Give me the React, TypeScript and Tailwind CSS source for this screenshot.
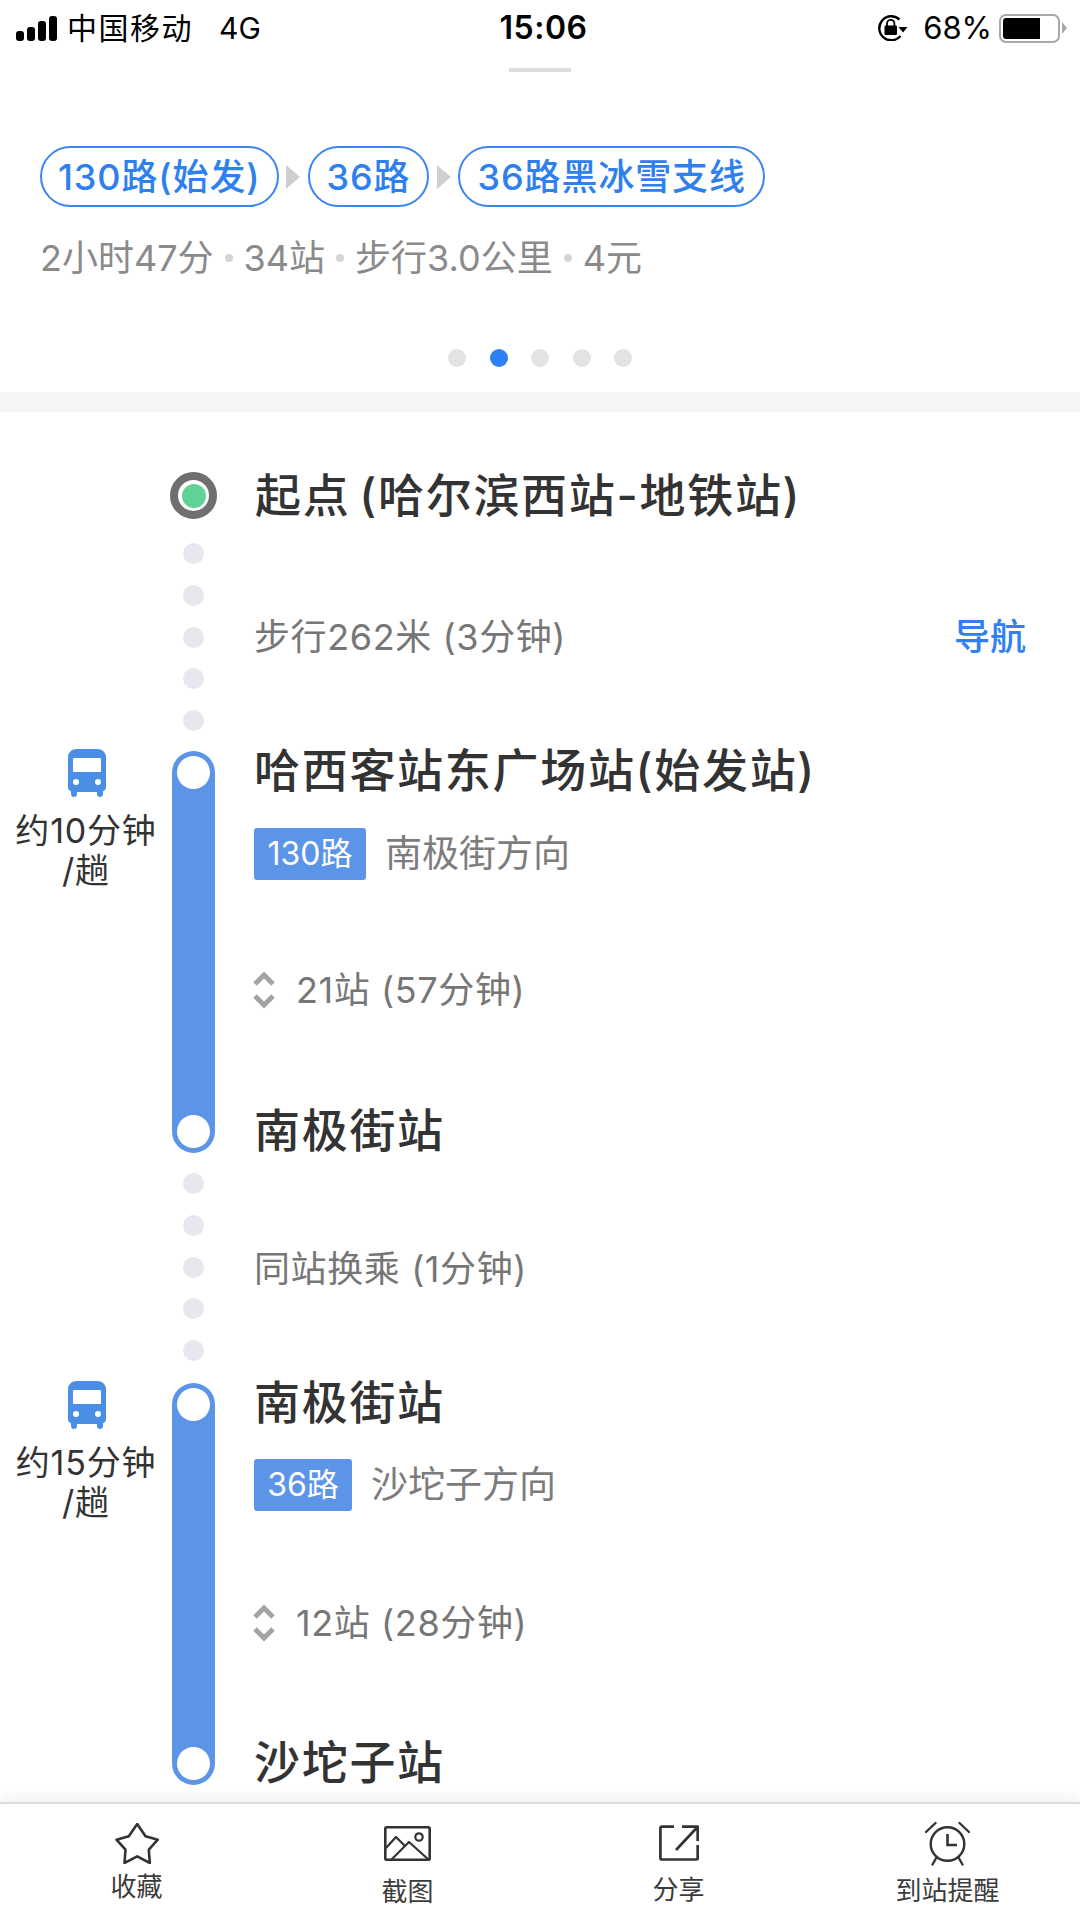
import React from "react";

const FONT = "font-['Inter','Noto_Sans_CJK_SC',sans-serif]";
const TITLE = "text-[46px] leading-[42px] font-medium text-[#333] tracking-[1.7px] whitespace-nowrap";
const NOTE = "text-[36px] text-[#767676] tracking-[0.6px] whitespace-nowrap";

function Signal() {
  return (
    <div className="flex items-end gap-[3px] h-[25px]">
      <div className="w-[8px] h-[10px] rounded-[3px] bg-black" />
      <div className="w-[8px] h-[14px] rounded-[3px] bg-black" />
      <div className="w-[8px] h-[20px] rounded-[3px] bg-black" />
      <div className="w-[8px] h-[25px] rounded-[3px] bg-black" />
    </div>
  );
}

function RotationLock() {
  return (
    <svg width="30" height="26" viewBox="0 0 30 26" fill="none">
      <path d="M21.500 4.500A12 12 0 1 0 22.500 21" stroke="#000" strokeWidth="2.400" />
      <path d="M20.500 12h9l-4.500 5.500z" fill="#000" />
      <rect x="6.500" y="10.500" width="12.500" height="9.500" rx="1.200" fill="#000" />
      <path d="M9 11V8.500a3.700 3.700 0 0 1 7.400 0V11" stroke="#000" strokeWidth="1.800" />
    </svg>
  );
}

function Battery() {
  return (
    <div className="flex items-center gap-[2px]">
      <div className="w-[61px] h-[29px] rounded-[7px] border-[2.5px] border-[#a8a8a8] p-[2px]">
        <div className="w-[37px] h-full rounded-l-[3px] bg-black" />
      </div>
      <svg width="5" height="12" viewBox="0 0 5 12">
        <path d="M0 0 L5 6 L0 12 Z" fill="#a8a8a8" />
      </svg>
    </div>
  );
}

function Pill({ text, px }: { text: string; px: string }) {
  return (
    <div className={`h-[61px] rounded-full border-2 border-[#3b86ee] ${px} flex items-center text-[36px] font-medium text-[#2f80ef] tracking-[0.9px] whitespace-nowrap`}>
      {text}
    </div>
  );
}

function Arrow() {
  return (
    <svg width="14" height="24" viewBox="0 0 14 24" className="mx-[7.500px] shrink-0">
      <path d="M0 0 L14 12 L0 24 Z" fill="#cfcfcf" />
    </svg>
  );
}

function Sep() {
  return <span className="mx-[11px] inline-block w-[8px] h-[8px] rounded-full bg-[#d4d4d4]" />;
}

function Dots({ pt }: { pt: string }) {
  return (
    <div className={`w-[43px] flex flex-col items-center gap-[20.75px] ${pt}`}>
      {[0, 1, 2, 3, 4].map((i) => (
        <div key={i} className="w-[21px] h-[21px] rounded-full bg-[#e6e8ee]" />
      ))}
    </div>
  );
}

function BusIcon() {
  return (
    <svg width="38" height="48" viewBox="0 0 38 48">
      <path
        fill="#4a8fe3"
        d="M9 0h20c5 0 9 3.500 9 8v30c0 2-1 3.500-3 4.200V45c0 1.700-1.300 3-3 3s-3-1.300-3-3v-2H9v2c0 1.700-1.300 3-3 3s-3-1.300-3-3v-2.800C1 41.500 0 40 0 38V8c0-4.500 4-8 9-8z"
      />
      <rect x="5" y="9" width="28" height="14" rx="1" fill="#fff" />
      <circle cx="8" cy="33" r="3" fill="#fff" />
      <circle cx="30" cy="33" r="3" fill="#fff" />
    </svg>
  );
}

function Updown() {
  return (
    <svg width="24" height="38" viewBox="0 0 24 38" fill="none" stroke="#a3a3a3" strokeWidth="5">
      <path d="M3 13 L12 4 L21 13" />
      <path d="M3 25 L12 34 L21 25" />
    </svg>
  );
}

function Segment({
  wait,
  first,
  tag,
  dir,
  stops,
  last,
  tagW,
  tagMt,
  stopsMt,
}: {
  wait: string;
  first: string;
  tag: string;
  dir: string;
  stops: string;
  last: string;
  tagW: string;
  tagMt: string;
  stopsMt: string;
}) {
  return (
    <div className="flex h-[402px]">
      <div className="w-[172px] flex flex-col items-center">
        <div className="-mt-[2px] ml-[1px]">
          <BusIcon />
        </div>
        <div className="mt-[14px] text-[34px] leading-[40px] text-[#333] text-center tracking-[0.8px] whitespace-nowrap">
          {wait}
          <br />
          /趟
        </div>
      </div>
      <div className="w-[43px] rounded-full bg-[#5c94e8] flex flex-col justify-between items-center py-[5px]">
        <div className="w-[33px] h-[33px] rounded-full bg-white" />
        <div className="w-[33px] h-[33px] rounded-full bg-white" />
      </div>
      <div className="pl-[39px] flex flex-col">
        <div className={`-mt-[2px] h-[42px] flex items-center ${TITLE}`}>{first}</div>
        <div className={`${tagMt} flex items-center`}>
          <div className={`${tagW} h-[52px] rounded-[3px] bg-[#5c94e8] flex items-center justify-center text-[32px] text-white`}>
            {tag}
          </div>
          <div className="ml-[19px] text-[37px] text-[#7c7c7c] whitespace-nowrap">{dir}</div>
        </div>
        <div className={`${stopsMt} flex items-center h-[50px] -ml-[2px]`}>
          <Updown />
          <div className={`ml-[20px] ${NOTE}`}>{stops}</div>
        </div>
        <div className={`mt-auto mb-[2px] h-[42px] flex items-center ${TITLE}`}>{last}</div>
      </div>
    </div>
  );
}

function ToolItem({ icon, label, lblMt, w }: { icon: React.ReactNode; label: string; lblMt: string; w: string }) {
  return (
    <div className={`${w} flex flex-col items-center`}>
      <div className="h-[50px] flex items-center justify-center">{icon}</div>
      <div className={`${lblMt} text-[26px] leading-[32px] text-[#3c3c3c] whitespace-nowrap`}>{label}</div>
    </div>
  );
}

export default function App() {
  return (
    <div className={`${FONT} w-[1080px] h-[1920px] bg-white flex flex-col overflow-hidden`}>
      {/* status bar */}
      <div className="h-[56px] flex items-center pl-[16px] pr-[13px] text-black">
        <div className="flex-1 flex items-center">
          <Signal />
          <span className="ml-[10px] text-[30px] tracking-[1.500px]">中国移动</span>
          <span className="ml-[26px] text-[30px]">4G</span>
        </div>
        <div className="text-[32px] font-semibold tracking-[0.5px] ml-[4px]">15:06</div>
        <div className="flex-1 flex items-center justify-end">
          <RotationLock />
          <span className="ml-[15px] text-[31px]">68%</span>
          <span className="ml-[7px]">
            <Battery />
          </span>
        </div>
      </div>

      {/* route summary */}
      <div className="h-[336px] flex flex-col">
        <div className="mt-[12px] mx-auto w-[62px] h-[4px] bg-[#dcdcdc]" />
        <div className="mt-[74px] pl-[40px] flex items-center">
          <Pill text="130路(始发)" px="px-[16px]" />
          <Arrow />
          <Pill text="36路" px="px-[17px]" />
          <Arrow />
          <Pill text="36路黑冰雪支线" px="px-[17px]" />
        </div>
        <div className="mt-[19px] pl-[40px] flex items-center text-[36px] leading-[64px] text-[#8a8a8a] whitespace-nowrap">
          <span>2小时47分</span>
          <Sep />
          <span>34站</span>
          <Sep />
          <span>步行3.0公里</span>
          <Sep />
          <span>4元</span>
        </div>
        <div className="mt-[59px] flex justify-center gap-[23.500px]">
          <div className="w-[18px] h-[18px] rounded-full bg-[#e3e3e3]" />
          <div className="w-[18px] h-[18px] rounded-full bg-[#2f80f5]" />
          <div className="w-[18px] h-[18px] rounded-full bg-[#e3e3e3]" />
          <div className="w-[18px] h-[18px] rounded-full bg-[#e3e3e3]" />
          <div className="w-[18px] h-[18px] rounded-full bg-[#e3e3e3]" />
        </div>
      </div>

      <div className="h-[20px] bg-[#f5f5f5]" />

      {/* timeline */}
      <div className="flex-1 min-h-0 overflow-hidden flex flex-col pt-[60px]">
        <div className="flex h-[47px]">
          <div className="w-[172px]" />
          <div className="w-[43px] flex justify-center">
            <div className="w-[47px] h-[47px] shrink-0 rounded-full border-[8px] border-[#6f6f6f] bg-white flex items-center justify-center">
              <div className="w-[24px] h-[24px] rounded-full bg-[#63d297]" />
            </div>
          </div>
          <div className={`pl-[40px] pb-[2px] flex items-center [word-spacing:-5px] ${TITLE}`}>起点 (哈尔滨西站-地铁站)</div>
        </div>

        <div className="flex h-[232px]">
          <div className="w-[172px]" />
          <Dots pt="pt-[24px]" />
          <div className="pl-[39px] pt-[4px] flex-1 pr-[54px] flex items-center justify-between">
            <span className={NOTE}>步行262米 (3分钟)</span>
            <span className="text-[36px] font-medium text-[#2f80f0]">导航</span>
          </div>
        </div>

        <Segment
          wait="约10分钟"
          first="哈西客站东广场站(始发站)"
          tag="130路"
          tagW="w-[112px]"
          tagMt="mt-[35px]"
          stopsMt="mt-[83px]"
          dir="南极街方向"
          stops="21站 (57分钟)"
          last="南极街站"
        />

        <div className="flex h-[230px]">
          <div className="w-[172px]" />
          <Dots pt="pt-[20px]" />
          <div className="pl-[39px] pt-[2px] flex-1 flex items-center">
            <span className={NOTE}>同站换乘 (1分钟)</span>
          </div>
        </div>

        <Segment
          wait="约15分钟"
          first="南极街站"
          tag="36路"
          tagW="w-[98px]"
          tagMt="mt-[34px]"
          stopsMt="mt-[85px]"
          dir="沙坨子方向"
          stops="12站 (28分钟)"
          last="沙坨子站"
        />
      </div>

      {/* toolbar */}
      <div className="h-[118px] shrink-0 border-t-2 border-[#dcdce0] shadow-[0_-6px_10px_rgba(0,0,0,0.05)] flex pt-[14px] bg-white relative">
        <ToolItem
          w="w-[273px]"
          lblMt="mt-[3px]"
          label="收藏"
          icon={
            <svg width="44" height="41" viewBox="-1.500 -1 44 41" fill="none" stroke="#333" strokeWidth="2.600" strokeLinejoin="round">
              <path d="M20.700 0 L29 12.300 L41.300 15.700 L32.300 25.700 L33.300 39 L20.700 32.300 L8 39 L9 25.700 L0 15.700 L12.300 12.300 Z" />
            </svg>
          }
        />
        <ToolItem
          w="w-[269px]"
          lblMt="mt-[8px]"
          label="截图"
          icon={
            <svg width="47" height="35" viewBox="0 0 47 35" fill="none" stroke="#333" strokeWidth="2.600" strokeLinejoin="round">
              <rect x="1.300" y="1.300" width="44.400" height="32.400" rx="1.500" />
              <path d="M2 22 L12 11 L21 20" strokeWidth="2.200" />
              <path d="M7 34 L25 16 L45 34" strokeWidth="2.200" />
              <circle cx="35" cy="11" r="3.700" strokeWidth="2.200" />
            </svg>
          }
        />
        <ToolItem
          w="w-[273px]"
          lblMt="mt-[6px]"
          label="分享"
          icon={
            <svg width="40" height="36" viewBox="0 0 40 36" fill="none" stroke="#333" strokeWidth="2.700" strokeLinejoin="round">
              <path d="M15 1.700 H3 Q1.400 1.700 1.400 3.300 V33 Q1.400 34.500 3 34.500 H37 Q38.700 34.500 38.700 33 V20" />
              <path d="M17 25 L38.500 2 M23 1.700 H38.700 V16" />
            </svg>
          }
        />
        <ToolItem
          w="w-[265px]"
          lblMt="mt-[7px]"
          label="到站提醒"
          icon={
            <svg width="45" height="45" viewBox="0 0 45 45" fill="none" stroke="#333" strokeWidth="2.400" strokeLinecap="round">
              <circle cx="22.500" cy="23" r="16.800" />
              <path d="M22.500 13 V24 H32" strokeWidth="2.600" strokeLinecap="butt" />
              <path d="M1 11 L10.500 2 M44 11 L34.500 2 M11.500 36.500 L7.500 43.500 M33.500 36.500 L37.500 43.500" />
            </svg>
          }
        />
      </div>
    </div>
  );
}
